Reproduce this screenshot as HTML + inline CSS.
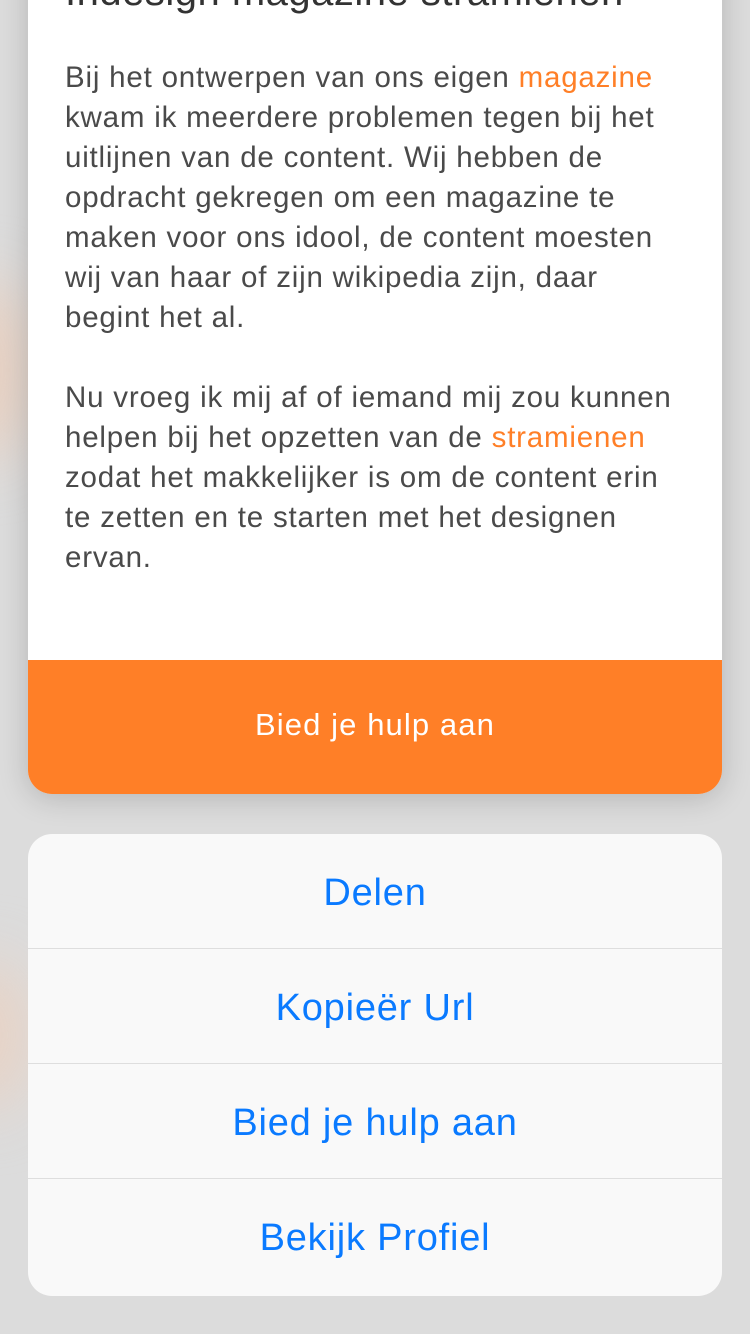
<!DOCTYPE html>
<html><head><meta charset="utf-8"><style>
html,body{margin:0;padding:0}
body{width:750px;height:1334px;position:relative;overflow:hidden;background:#dcdcdc;font-family:"Liberation Sans",sans-serif}
.blob{position:absolute;border-radius:50%;filter:blur(30px)}
.card{position:absolute;left:28px;top:-40px;width:694px;height:834px;background:#fff;border-radius:0 0 24px 24px;overflow:hidden;box-shadow:0 4px 30px rgba(0,0,0,.18)}
.title{position:absolute;left:37px;top:10px;font-size:40px;color:#333;white-space:nowrap;letter-spacing:.5px}
.body{position:absolute;left:37px;top:98px;width:680px;font-size:29.5px;line-height:40px;color:#4a4a4a;letter-spacing:.8px;white-space:nowrap}
.o{color:#ff7f27}
.btn{position:absolute;left:0;top:700px;width:694px;height:134px;background:#ff7f27;color:#fff;font-size:31px;letter-spacing:1.1px;text-align:center;line-height:130px}
.sheet{position:absolute;left:28px;top:834px;width:694px;height:462px;background:#f9f9f9;border-radius:24px;overflow:hidden}
.row{height:114px;border-bottom:1px solid #dedede;color:#0a7aff;font-size:38px;letter-spacing:.8px;text-align:center;line-height:118px}
.row:last-child{border:none}
</style></head><body>
<div class="blob" style="left:-60px;top:280px;width:90px;height:180px;background:#e8cfbf"></div>
<div class="blob" style="left:-60px;top:960px;width:90px;height:150px;background:#e8d2c4"></div>
<div class="card">
<div class="title">Indesign magazine stramienen</div>
<div class="body">Bij het ontwerpen van ons eigen <span class="o">magazine</span><br>kwam ik meerdere problemen tegen bij het<br>uitlijnen van de content. Wij hebben de<br>opdracht gekregen om een magazine te<br>maken voor ons idool, de content moesten<br>wij van haar of zijn wikipedia zijn, daar<br>begint het al.<br><br>Nu vroeg ik mij af of iemand mij zou kunnen<br>helpen bij het opzetten van de <span class="o">stramienen</span><br>zodat het makkelijker is om de content erin<br>te zetten en te starten met het designen<br>ervan.</div>
<div class="btn">Bied je hulp aan</div>
</div>
<div class="sheet">
<div class="row">Delen</div>
<div class="row">Kopieër Url</div>
<div class="row">Bied je hulp aan</div>
<div class="row">Bekijk Profiel</div>
</div>
</body></html>
